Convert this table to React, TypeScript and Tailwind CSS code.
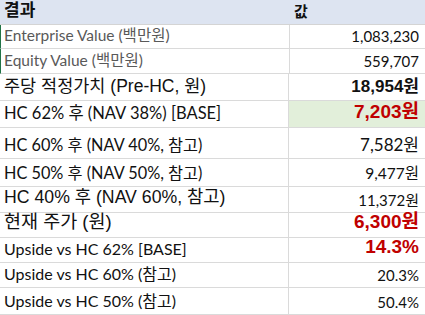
const calibri = "font-['Lato','Noto_Sans_CJK_KR',sans-serif]"
const arial = "font-['Liberation_Sans','Noto_Sans_CJK_KR',sans-serif]"

type Row = {
  label: string
  value: string
  h: string
  labelCls: string
  valueCls: string
  green?: boolean
  mark?: boolean
}

const rows: Row[] = [
  { label: 'Enterprise Value (백만원)', value: '1,083,230', h: 'h-[24px]', labelCls: `${calibri} text-[15.5px] text-[#595959]`, valueCls: `${calibri} text-[15px]`, mark: true },
  { label: 'Equity Value (백만원)', value: '559,707', h: 'h-[25px]', labelCls: `${calibri} text-[15.5px] text-[#595959]`, valueCls: `${calibri} text-[15px]`, mark: true },
  { label: '주당 적정가치 (Pre-HC, 원)', value: '18,954원', h: 'h-[27px]', labelCls: `${arial} text-[17.5px]`, valueCls: `${arial} text-[17px] font-bold` },
  { label: 'HC 62% 후 (NAV 38%) [BASE]', value: '7,203원', h: 'h-[27px]', labelCls: `${calibri} text-[16.5px]`, valueCls: `${arial} text-[19px] font-bold text-[#c00000]`, green: true },
  { label: 'HC 60% 후 (NAV 40%, 참고)', value: '7,582원', h: 'h-[31px]', labelCls: `${calibri} text-[16.3px]`, valueCls: `${calibri} text-[17px]` },
  { label: 'HC 50% 후 (NAV 50%, 참고)', value: '9,477원', h: 'h-[28px]', labelCls: `${calibri} text-[16.3px]`, valueCls: `${calibri} text-[15.5px]` },
  { label: 'HC 40% 후 (NAV 60%, 참고)', value: '11,372원', h: 'h-[26px]', labelCls: `${arial} text-[17.7px]`, valueCls: `${calibri} text-[15px]` },
  { label: '현재 주가 (원)', value: '6,300원', h: 'h-[25px]', labelCls: `${arial} text-[18.5px]`, valueCls: `${arial} text-[19px] font-bold text-[#c00000]` },
  { label: 'Upside vs HC 62% [BASE]', value: '14.3%', h: 'h-[25px]', labelCls: `${calibri} text-[16px]`, valueCls: `${arial} text-[19px] font-bold text-[#c00000]` },
  { label: 'Upside vs HC 60% (참고)', value: '20.3%', h: 'h-[25px]', labelCls: `${calibri} text-[16px]`, valueCls: `${calibri} text-[15px]` },
  { label: 'Upside vs HC 50% (참고)', value: '50.4%', h: 'h-[27px]', labelCls: `${calibri} text-[16px]`, valueCls: `${calibri} text-[15px]` },
]

export default function App() {
  return (
    <div className="w-[425px] h-[315px] overflow-hidden bg-white text-[#111]">
      <div className="flex h-[25px] bg-[#dde4f1] border-b border-[#d4d4d4] items-end pb-[1px]">
        <div className={`w-[288px] pl-[4px] ${arial} text-[17px] font-bold`}>결과</div>
        <div className={`pl-[6px] ${arial} text-[15px] font-bold`}>값</div>
      </div>
      {rows.map((r) => (
        <div key={r.label} className={`flex ${r.h} border-b border-[#dadada] ${r.mark ? 'border-l border-l-[#217346]' : ''}`}>
          <div className={`w-[288px] shrink-0 flex items-end pb-[1px] whitespace-nowrap ${r.mark ? 'pl-[3px]' : 'pl-[4px]'} ${r.labelCls}`}>
            {r.label}
          </div>
          <div className={`flex-1 flex items-end justify-end pb-[1px] pr-[6px] border-l border-[#dadada] whitespace-nowrap ${r.green ? 'bg-[#e2efda]' : ''} ${r.valueCls}`}>
            {r.value}
          </div>
        </div>
      ))}
    </div>
  )
}
